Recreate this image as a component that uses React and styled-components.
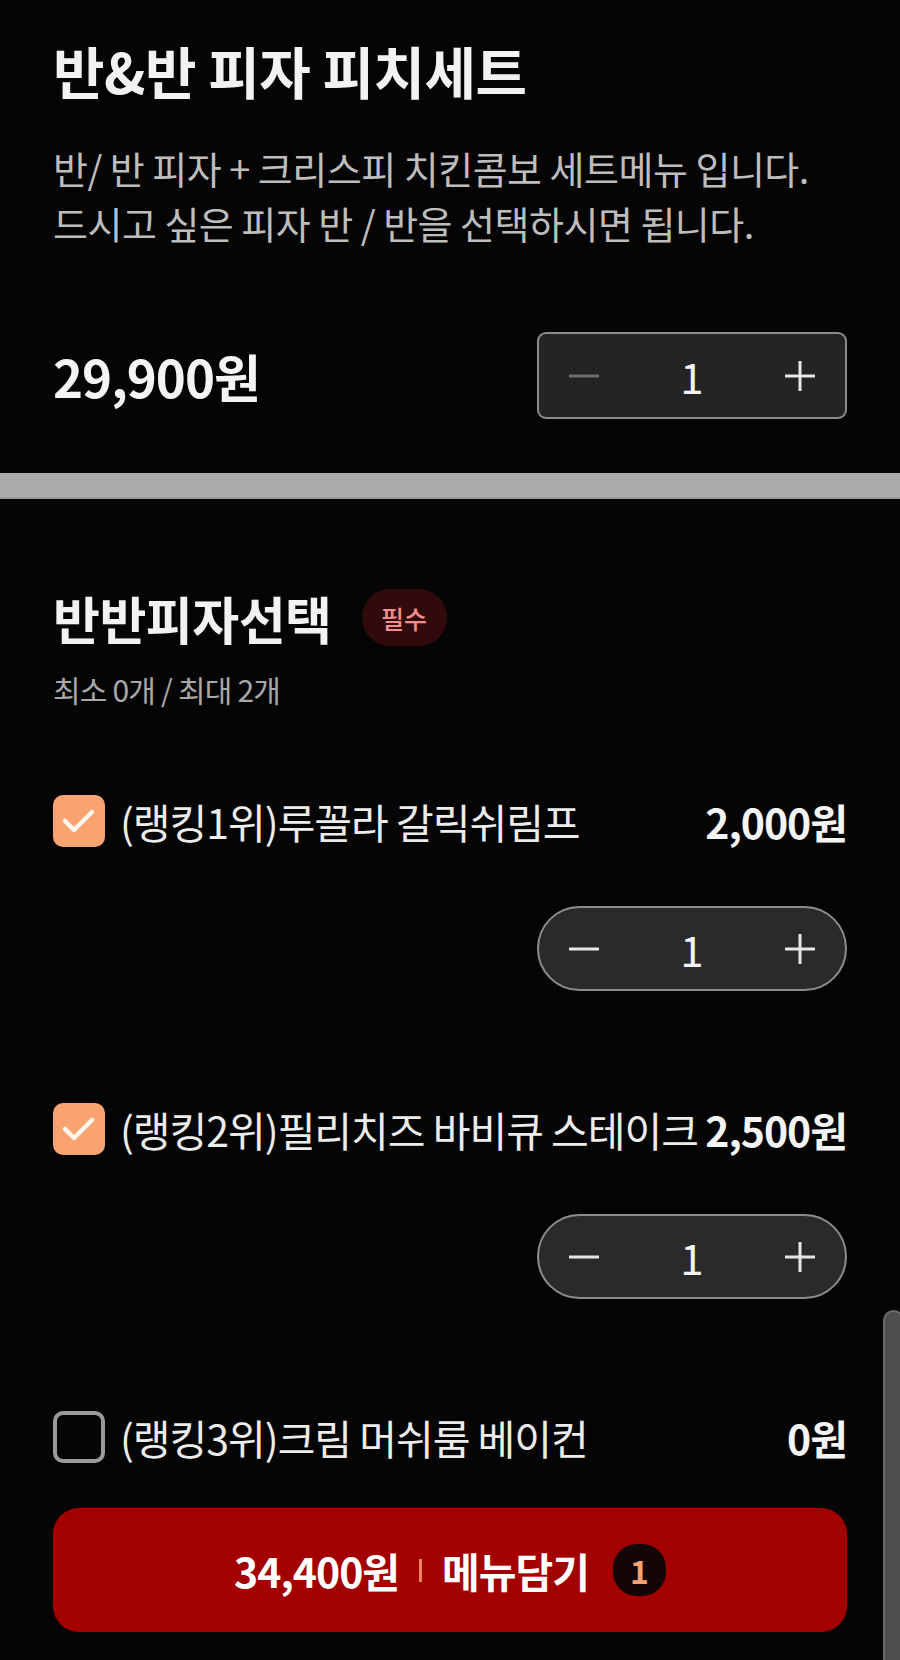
import React from 'react';
import styled, { createGlobalStyle } from 'styled-components';

const GlobalStyle = createGlobalStyle`
  html, body {
    margin: 0;
    padding: 0;
    background: #050505;
  }
  body {
    font-family: "Noto Sans CJK KR", "Noto Sans", sans-serif;
    color: #f2f2f2;
  }
  * {
    box-sizing: border-box;
  }
`;

const Page = styled.div`
  position: relative;
  width: 900px;
  min-height: 1660px;
  overflow: hidden;
  background: #050505;
`;

const Header = styled.section`
  padding: 40px 53px 54px;
`;

const Title = styled.h1`
  margin: 0;
  font-size: 56px;
  line-height: 60px;
  font-weight: 700;
  color: #f2f2f2;
  letter-spacing: -0.5px;
`;

const Description = styled.p`
  margin: 40px 0 0;
  font-size: 38px;
  line-height: 55px;
  font-weight: 400;
  color: #bdbdbd;
  letter-spacing: -0.5px;
`;

const PriceRow = styled.div`
  margin-top: 82px;
  display: flex;
  align-items: center;
  justify-content: space-between;
`;

const Price = styled.div`
  font-size: 51px;
  font-weight: 700;
  color: #f4f4f4;
  letter-spacing: -1px;
`;

const Stepper = styled.div`
  width: 310px;
  height: ${(p) => (p.$pill ? '85px' : '87px')};
  display: grid;
  grid-template-columns: 90px 1fr 90px;
  align-items: center;
  background: ${(p) => (p.$pill ? '#2a2a2a' : '#242424')};
  border: 2px solid #8c8c8c;
  border-radius: ${(p) => (p.$pill ? '44px' : '9px')};
  margin-left: auto;
`;

const StepButton = styled.button`
  height: 100%;
  display: flex;
  align-items: center;
  justify-content: center;
  background: none;
  border: none;
  padding: 0;
  color: ${(p) => (p.$disabled ? '#6e6e6e' : '#e6e6e6')};
`;

const StepValue = styled.span`
  text-align: center;
  font-size: 42px;
  font-weight: 400;
  color: #f4f4f4;
`;

const Divider = styled.div`
  height: 26px;
  background: #aaaaaa;
  border-bottom: 2px solid #9a9a9a;
`;

const Options = styled.section`
  padding: 90px 53px 27px;
`;

const GroupHeader = styled.div`
  display: flex;
  align-items: center;
  gap: 30px;
  height: 57px;
`;

const GroupTitle = styled.h2`
  margin: 0;
  font-size: 51px;
  font-weight: 700;
  color: #f2f2f2;
  letter-spacing: -0.5px;
`;

const Badge = styled.span`
  display: inline-flex;
  align-items: center;
  justify-content: center;
  width: 85px;
  height: 57px;
  border-radius: 29px;
  background: #310b0c;
  color: #f28d8d;
  font-size: 25px;
  font-weight: 500;
`;

const Limit = styled.div`
  margin-top: 25px;
  font-size: 30px;
  line-height: 36px;
  color: #a8a8a8;
  letter-spacing: -0.8px;
`;

const OptionList = styled.div`
  margin-top: 88px;
  display: flex;
  flex-direction: column;
  gap: 112px;
`;

const OptionItem = styled.div`
  display: flex;
  flex-direction: column;
  gap: 59px;
`;

const OptionRow = styled.label`
  display: flex;
  align-items: center;
  height: 52px;
`;

const CheckBox = styled.span`
  flex: none;
  width: 52px;
  height: 52px;
  border-radius: 10px;
  display: flex;
  align-items: center;
  justify-content: center;
  background: ${(p) => (p.$checked ? '#f9a370' : 'transparent')};
  border: ${(p) => (p.$checked ? 'none' : '4px solid #9a9a9a')};
`;

const OptionName = styled.span`
  flex: 1;
  min-width: 0;
  margin-left: 15px;
  font-size: 41px;
  font-weight: 400;
  color: #ececec;
  white-space: nowrap;
  letter-spacing: -1px;
`;

const OptionPrice = styled.span`
  flex: none;
  font-size: 41px;
  font-weight: 700;
  color: #f4f4f4;
  letter-spacing: -1px;
`;

const SubmitButton = styled.button`
  margin-top: 45px;
  width: 100%;
  height: 124px;
  border: none;
  border-radius: 26px;
  background: #a30000;
  display: flex;
  align-items: center;
  justify-content: center;
  gap: 20px;
  font-family: inherit;
  color: #ffffff;
`;

const ButtonText = styled.span`
  font-size: 41px;
  font-weight: 700;
  letter-spacing: -1px;
`;

const ButtonBar = styled.span`
  width: 3px;
  height: 23px;
  background: #f08560;
`;

const CountBadge = styled.span`
  margin-left: 4px;
  width: 53px;
  height: 52px;
  border-radius: 24px;
  background: #140606;
  color: #f4a272;
  font-size: 32px;
  font-weight: 700;
  display: flex;
  align-items: center;
  justify-content: center;
`;

const ScrollThumb = styled.div`
  position: absolute;
  right: -4px;
  top: 1310px;
  width: 21px;
  height: 420px;
  background: #4e4e4e;
  border: 2px solid #6a6a6a;
  border-radius: 12px;
`;

const MinusIcon = () => (
  <svg width="30" height="30" viewBox="0 0 30 30">
    <line x1="0" y1="15" x2="30" y2="15" stroke="currentColor" strokeWidth="3" />
  </svg>
);

const PlusIcon = () => (
  <svg width="30" height="30" viewBox="0 0 30 30">
    <line x1="0" y1="15" x2="30" y2="15" stroke="currentColor" strokeWidth="3" />
    <line x1="15" y1="0" x2="15" y2="30" stroke="currentColor" strokeWidth="3" />
  </svg>
);

const CheckIcon = () => (
  <svg width="52" height="52" viewBox="0 0 52 52">
    <polyline
      points="12,26 21,35 39,17"
      fill="none"
      stroke="#fff6ef"
      strokeWidth="4.5"
      strokeLinecap="round"
      strokeLinejoin="round"
    />
  </svg>
);

const QuantityStepper = ({ value, pill, minDisabled }) => (
  <Stepper $pill={pill}>
    <StepButton $disabled={minDisabled}><MinusIcon /></StepButton>
    <StepValue>{value}</StepValue>
    <StepButton><PlusIcon /></StepButton>
  </Stepper>
);

const options = [
  { name: '(랭킹1위)루꼴라 갈릭쉬림프', price: '2,000원', checked: true, qty: 1 },
  { name: '(랭킹2위)필리치즈 바비큐 스테이크', price: '2,500원', checked: true, qty: 1 },
  { name: '(랭킹3위)크림 머쉬룸 베이컨', price: '0원', checked: false, qty: 0 },
];

const App = () => (
  <Page>
    <GlobalStyle />
    <Header>
      <Title>반&반 피자 피치세트</Title>
      <Description>
        반/ 반 피자 + 크리스피 치킨콤보 세트메뉴 입니다.
        <br />
        드시고 싶은 피자 반 / 반을 선택하시면 됩니다.
      </Description>
      <PriceRow>
        <Price>29,900원</Price>
        <QuantityStepper value={1} minDisabled />
      </PriceRow>
    </Header>
    <Divider />
    <Options>
      <GroupHeader>
        <GroupTitle>반반피자선택</GroupTitle>
        <Badge>필수</Badge>
      </GroupHeader>
      <Limit>최소 0개 / 최대 2개</Limit>
      <OptionList>
        {options.map((opt) => (
          <OptionItem key={opt.name}>
            <OptionRow>
              <CheckBox $checked={opt.checked}>{opt.checked && <CheckIcon />}</CheckBox>
              <OptionName>{opt.name}</OptionName>
              <OptionPrice>{opt.price}</OptionPrice>
            </OptionRow>
            {opt.checked && <QuantityStepper value={opt.qty} pill />}
          </OptionItem>
        ))}
      </OptionList>
      <SubmitButton type="button">
        <ButtonText>34,400원</ButtonText>
        <ButtonBar />
        <ButtonText>메뉴담기</ButtonText>
        <CountBadge>1</CountBadge>
      </SubmitButton>
    </Options>
    <ScrollThumb />
  </Page>
);

export default App;
